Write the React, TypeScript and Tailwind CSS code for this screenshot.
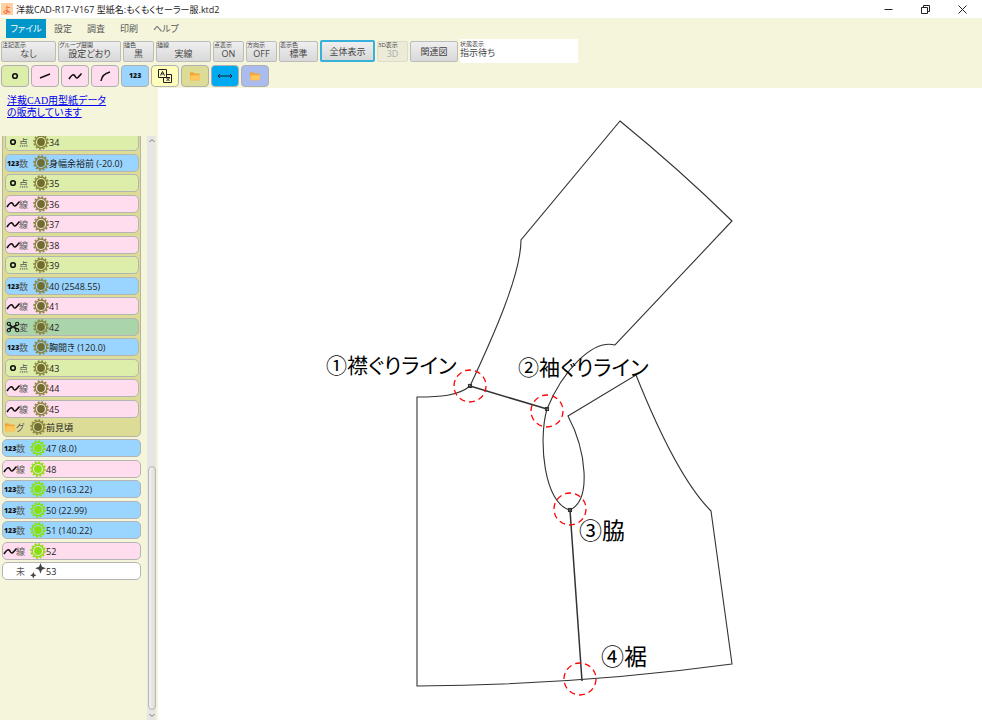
import { ReactNode } from 'react';

type Kind = 'point' | 'num' | 'line' | 'change' | 'new';

type Item = {
    kind: Kind;
    label: string;
};

const kinds: Record<Kind, { mark: string; color: string }> = {
    point: { mark: '点', color: 'bg-[#ddeeaa]' },
    num: { mark: '数', color: 'bg-[#99d5ff]' },
    line: { mark: '線', color: 'bg-[#ffdcee]' },
    change: { mark: '変', color: 'bg-[#aad4aa]' },
    new: { mark: '未', color: 'bg-white' },
};

const groupItems: Item[] = [
    { kind: 'point', label: '34' },
    { kind: 'num', label: '身幅余裕前 (-20.0)' },
    { kind: 'point', label: '35' },
    { kind: 'line', label: '36' },
    { kind: 'line', label: '37' },
    { kind: 'line', label: '38' },
    { kind: 'point', label: '39' },
    { kind: 'num', label: '40 (2548.55)' },
    { kind: 'line', label: '41' },
    { kind: 'change', label: '42' },
    { kind: 'num', label: '胸開き (120.0)' },
    { kind: 'point', label: '43' },
    { kind: 'line', label: '44' },
    { kind: 'line', label: '45' },
];

const items: Item[] = [
    { kind: 'num', label: '47 (8.0)' },
    { kind: 'line', label: '48' },
    { kind: 'num', label: '49 (163.22)' },
    { kind: 'num', label: '50 (22.99)' },
    { kind: 'num', label: '51 (140.22)' },
    { kind: 'line', label: '52' },
    { kind: 'new', label: '53' },
];

const options = [
    { caption: '注記表示', value: 'なし', width: 'w-[55px]' },
    { caption: 'グループ展開', value: '設定どおり', width: 'w-[63px]' },
    { caption: '描色', value: '黒', width: 'w-[31px]' },
    { caption: '描線', value: '実線', width: 'w-[55px]' },
    { caption: '点表示', value: 'ON', width: 'w-[31px]' },
    { caption: '方向示', value: 'OFF', width: 'w-[31px]' },
    { caption: '表示色', value: '標準', width: 'w-[39px]' },
];

function PointIcon() {
    return (
        <svg viewBox="0 0 12 12" className="size-3 shrink-0" fill="none" stroke="#111" strokeWidth="1.6">
            <circle cx="6" cy="6" r="2.3" />
        </svg>
    );
}

function WaveIcon() {
    return (
        <svg viewBox="0 0 12 12" className="size-3 shrink-0 overflow-visible" fill="none" stroke="#111" strokeWidth="1.6">
            <path d="M0 9 C2 6 3.500 4 5 5 C6.500 6 6.500 8.500 8 8 C9.500 7.500 11 5 12.500 3.500" />
        </svg>
    );
}

function NumIcon() {
    return <span className="w-3 shrink-0 text-center text-[7px] leading-none font-black text-[#111]">123</span>;
}

function ChangeIcon() {
    return (
        <svg viewBox="0 0 12 12" className="size-3 shrink-0 overflow-visible" fill="none" stroke="#111" strokeWidth="1.1">
            <circle cx="1.8" cy="2.8" r="1.6" />
            <circle cx="1.8" cy="9.2" r="1.6" />
            <circle cx="10.2" cy="2.8" r="1.6" />
            <circle cx="10.2" cy="9.2" r="1.6" />
            <path d="M3 4 L9 8 M3 8 L9 4 M1.800 4.400 Q6 7 10.200 4.400 M1.800 7.600 Q6 5 10.200 7.600" />
        </svg>
    );
}

function FolderIcon({ className }: { className: string }) {
    return (
        <svg viewBox="0 0 14 12" className={className}>
            <path d="M1 1.500 h4 l1.500 1.500 h6 v8 h-11.500 z" fill="#f2a53a" />
            <path d="M1 11 l1 -6 h11 l-0.500 6 z" fill="#ffc65a" />
        </svg>
    );
}

function Gear({ active }: { active?: boolean }) {
    const color = active ? '#88e010' : '#8a8742';
    const core = active ? '#88e010' : '#716d30';
    return (
        <svg viewBox="0 0 16 16" className="size-4 shrink-0" fill="none">
            <circle cx="8" cy="8" r="7" stroke={color} strokeWidth="1.6" strokeDasharray="2 1.665" />
            <circle cx="8" cy="8" r="5.8" stroke={color} strokeWidth="1.4" />
            <circle cx="8" cy="8" r="3.9" fill={core} />
        </svg>
    );
}

function Sparkle() {
    return (
        <svg viewBox="0 0 16 16" className="size-4 shrink-0" fill="#444">
            <path d="M10.500 0 L12 3.800 L15.800 5.300 L12 6.800 L10.500 10.600 L9 6.800 L5.200 5.300 L9 3.800 Z" />
            <path d="M3.300 9 L4.300 11.200 L6.500 12.200 L4.300 13.200 L3.300 15.400 L2.300 13.200 L0 12.200 L2.300 11.200 Z" />
        </svg>
    );
}

const kindIcons: Record<Kind, ReactNode> = {
    point: <PointIcon />,
    num: <NumIcon />,
    line: <WaveIcon />,
    change: <ChangeIcon />,
    new: <span className="w-3 shrink-0" />,
};

function ItemRow({ item, active }: { item: Item; active?: boolean }) {
    return (
        <li className="flex h-[18px] odd:h-[19px]">
            <button
                className={`flex h-[18px] w-full items-center rounded-[5px] border border-[#b4b4b4] pl-px text-left whitespace-nowrap ${kinds[item.kind].color}`}
            >
                {kindIcons[item.kind]}
                <span className="w-3.5 text-[#555]">{kinds[item.kind].mark}</span>
                {item.kind === 'new' ? <Sparkle /> : <Gear active={active} />}
                <span>{item.label}</span>
            </button>
        </li>
    );
}

function ToolButton({ label, color, children }: { label: string; color: string; children: ReactNode }) {
    return (
        <button aria-label={label} className={`flex h-[22px] w-7 items-center justify-center rounded border border-[#b0b0b0] ${color}`}>
            {children}
        </button>
    );
}

function Sidebar() {
    return (
        <aside className="flex w-[158px] shrink-0 flex-col bg-[#f5f5dc]">
            <a
                href="#patterns"
                className="block h-12 px-[7px] pt-[7px] font-['Liberation_Serif','Noto_Sans_CJK_JP',serif] text-[10px] leading-[12px] text-[#0000ee] underline"
            >
                洋裁CAD用型紙データ
                <br />
                の販売しています
            </a>
            <div className="flex min-h-0 flex-1">
                <div className="min-w-0 flex-1 overflow-hidden pl-0.5">
                    <div className="-mt-1.5 mr-1.5 rounded-[5px] border border-[#b4b4a0] bg-[#dcdc96] pt-0.5">
                        <ul className="flex flex-col gap-0.5 pr-px pl-0.5">
                            {groupItems.map((item) => (
                                <ItemRow key={item.label} item={item} />
                            ))}
                        </ul>
                        <button className="flex h-[18px] items-center pl-px text-left">
                            <FolderIcon className="h-2.5 w-3" />
                            <span className="w-3.5 text-[#555]">グ</span>
                            <Gear />
                            <span>前見頃</span>
                        </button>
                    </div>
                    <ul className="mt-0.5 mr-1.5 flex flex-col gap-0.5">
                        {items.map((item) => (
                            <ItemRow key={item.label} item={item} active />
                        ))}
                    </ul>
                </div>
                <div className="mr-0.5 flex w-[9px] flex-col items-center bg-[#e6e6e6]">
                    <svg viewBox="0 0 8 8" className="my-px size-2" fill="none" stroke="#777">
                        <path d="M1.500 5 L4 2.500 L6.500 5" />
                    </svg>
                    <div className="flex-[321]" />
                    <div className="w-2 flex-[243] rounded border border-[#b8b8b8] bg-linear-to-r from-[#f2f2f2] to-[#dcdcdc]" />
                    <svg viewBox="0 0 8 8" className="my-px size-2" fill="none" stroke="#777">
                        <path d="M1.500 3 L4 5.500 L6.500 3" />
                    </svg>
                </div>
            </div>
        </aside>
    );
}

function PatternCanvas() {
    const joints = [
        [470, 386],
        [547, 409],
        [570, 510],
    ];
    const marks = [
        [470, 386],
        [547, 411],
        [570, 509],
        [580, 679],
    ];
    return (
        <main className="min-w-0 flex-1 overflow-hidden bg-white">
            <svg viewBox="158 88 824 632" className="w-full" fill="none">
                <g stroke="#333" strokeWidth="1.1">
                    <path d="M470 386 C492 339 521 275 521 240 L620 121 Q680 170 732 221 L615 345 C592 339 562 372 547 409 C538 440 544 504 570 510 C592 500 586 450 568 416 L636 375 C658 430 685 485 711 511 L732 664 Q577 685 417 686 V397 C440 397 458 396 470 386" />
                    <path d="M470 386 L547 409 M570 510 L582 681" strokeWidth="1.5" />
                    {joints.map(([x, y]) => (
                        <rect key={x} x={x - 1.5} y={y - 1.5} width="3" height="3" />
                    ))}
                </g>
                <g stroke="#ff0000" strokeWidth="1.3" strokeDasharray="6 4">
                    {marks.map(([x, y]) => (
                        <circle key={x} cx={x} cy={y} r="16" />
                    ))}
                </g>
                <g fill="#000">
                    <text x="326" y="373" className="text-[21px]">
                        ①襟ぐりライン
                    </text>
                    <text x="518" y="375" className="text-[21px]">
                        ②袖ぐりライン
                    </text>
                    <text x="579" y="539" className="text-[23px]">
                        ③脇
                    </text>
                    <text x="601" y="665" className="text-[23px]">
                        ④裾
                    </text>
                </g>
            </svg>
        </main>
    );
}

export default function App() {
    return (
        <div className="flex h-screen flex-col overflow-hidden bg-white font-['Open_Sans','Noto_Sans_CJK_JP',sans-serif] text-[9px] leading-none text-[#222] [font-feature-settings:'palt']">
            <header className="flex h-[18px] shrink-0 items-center pl-px">
                <span className="flex size-3 items-center justify-center bg-[#ffd0a0] text-[#ee5533]">よ</span>
                <h1 className="ml-[3px]">洋裁CAD-R17-V167 型紙名:もくもくセーラー服.ktd2</h1>
                <div className="mr-[15px] ml-auto flex gap-7">
                    <button aria-label="最小化">
                        <svg viewBox="0 0 9 9" className="size-[9px]" fill="none" stroke="#222">
                            <path d="M0.500 4.500 H8.500" />
                        </svg>
                    </button>
                    <button aria-label="元に戻す">
                        <svg viewBox="0 0 9 9" className="size-[9px]" fill="none" stroke="#222">
                            <path d="M0.500 2.500 h6 v6 h-6 z M2.500 2.500 v-2 h6 v6 h-2" />
                        </svg>
                    </button>
                    <button aria-label="閉じる">
                        <svg viewBox="0 0 9 9" className="size-[9px]" fill="none" stroke="#222">
                            <path d="M0.500 0.500 L8.500 8.500 M8.500 0.500 L0.500 8.500" />
                        </svg>
                    </button>
                </div>
            </header>

            <div className="shrink-0 bg-[#f5f5dc]">
                <nav className="flex h-[21px] items-center gap-[15px] pl-1.5 text-[#555]">
                    <button className="-mr-[7px] h-[19px] w-10 bg-[#0096c9] text-white">ファイル</button>
                    <button>設定</button>
                    <button>調査</button>
                    <button>印刷</button>
                    <button>ヘルプ</button>
                </nav>

                {/* display options */}
                <div className="flex h-6 items-center gap-0.5 pl-px text-[#444]">
                    {options.map((option) => (
                        <button
                            key={option.caption}
                            className={`flex h-[21px] shrink-0 flex-col rounded-xs border border-[#bcbcbc] bg-linear-to-b from-[#efefef] to-[#d8d8d8] ${option.width}`}
                        >
                            <span className="text-left text-[6px] leading-[6px] whitespace-nowrap">{option.caption}</span>
                            <span className="text-center leading-[12px]">{option.value}</span>
                        </button>
                    ))}
                    <button className="h-[22px] w-[55px] shrink-0 rounded-xs border-2 border-[#38b0dc] bg-linear-to-b from-[#efefef] to-[#d8d8d8]">
                        全体表示
                    </button>
                    <button disabled className="flex h-[21px] w-[31px] shrink-0 flex-col rounded-xs border border-[#dcdcc8] bg-[#ecebd8] text-[#aaa]">
                        <span className="text-left text-[6px] leading-[6px] whitespace-nowrap text-[#444]">3D表示</span>
                        <span className="text-center leading-[12px]">3D</span>
                    </button>
                    <button className="h-[21px] w-12 shrink-0 rounded-xs border border-[#bcbcbc] bg-linear-to-b from-[#efefef] to-[#d8d8d8]">
                        関連図
                    </button>
                    <div className="h-6 w-[118px] bg-white pt-0.5">
                        <p className="text-[6px] leading-[6px]">状態表示</p>
                        <p className="leading-[12px]">指示待ち</p>
                    </div>
                </div>

                <div className="flex h-[25px] items-center gap-0.5 pl-px">
                    <ToolButton label="点" color="bg-[#ddeeaa]">
                        <PointIcon />
                    </ToolButton>
                    <ToolButton label="直線" color="bg-[#ffdcee]">
                        <svg viewBox="0 0 14 14" className="size-3.5" stroke="#111" strokeWidth="1.5">
                            <path d="M2 9 L12 5" />
                        </svg>
                    </ToolButton>
                    <ToolButton label="曲線" color="bg-[#ffdcee]">
                        <WaveIcon />
                    </ToolButton>
                    <ToolButton label="円弧" color="bg-[#ffdcee]">
                        <svg viewBox="0 0 14 14" className="size-3.5" fill="none" stroke="#111" strokeWidth="1.5">
                            <path d="M3 12 Q4 5 12 3" />
                        </svg>
                    </ToolButton>
                    <ToolButton label="数値" color="bg-[#99d5ff]">
                        <NumIcon />
                    </ToolButton>
                    <ToolButton label="文字" color="bg-[#ffffbb]">
                        <svg viewBox="0 0 14 14" className="size-3.5" fill="none" stroke="#222">
                            <path d="M0.500 0.500 h8 v8 h-8 z M8.500 5.500 h5 v8 h-8 v-5" />
                            <path d="M2.500 6.500 L4.500 2.500 L6.500 6.500 M3.500 5 h2 M8 8.500 h4 M8.500 12 L11.500 9 M8.500 9 L11.500 12" />
                        </svg>
                    </ToolButton>
                    <ToolButton label="グループ" color="bg-[#dcdc96]">
                        <FolderIcon className="h-2.5 w-3" />
                    </ToolButton>
                    <ToolButton label="計測" color="bg-[#00aaf0]">
                        <svg viewBox="0 0 16 8" className="h-2 w-4" fill="none" stroke="#112233">
                            <path d="M1 4 H15 M3 2 L1 4 L3 6 M13 2 L15 4 L13 6" />
                        </svg>
                    </ToolButton>
                    <ToolButton label="フォルダ" color="bg-[#aabbee]">
                        <FolderIcon className="h-2.5 w-3" />
                    </ToolButton>
                </div>
            </div>

            <div className="flex min-h-0 flex-1">
                <Sidebar />
                <PatternCanvas />
            </div>
        </div>
    );
}
